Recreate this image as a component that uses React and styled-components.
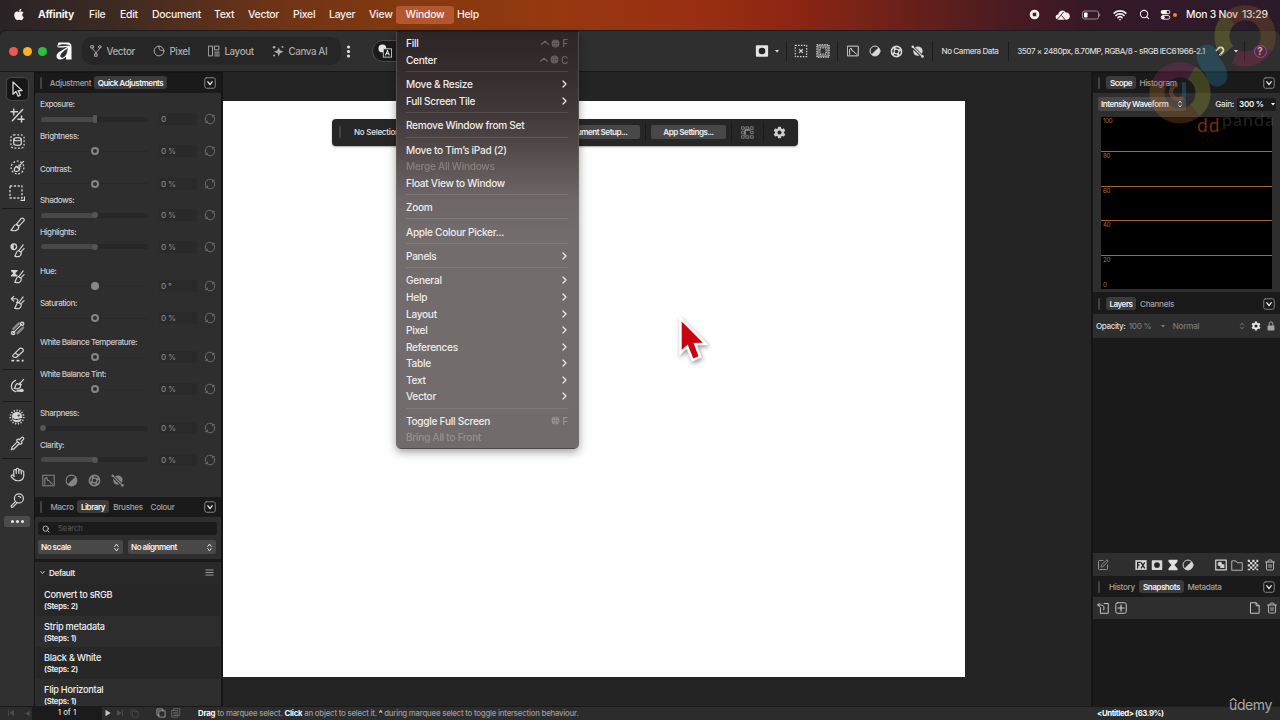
import styled, { createGlobalStyle, css } from 'styled-components';
import { FaApple } from 'react-icons/fa';
import { IoSettingsSharp } from 'react-icons/io5';
import { Search, Wifi, Hand, Pipette, Trash2, SquarePen } from 'lucide-react';

const GlobalStyle = createGlobalStyle`
  *,
  *::after {
    box-sizing: border-box;
  }

  body {
    margin: 0;
    background: #242424;
    font-family: Inter, "Liberation Sans", sans-serif;
    color: #e6e6e6;
    overflow: hidden;
  }
`;

const Screen = styled.div`
  position: relative;
  width: 1280px;
  height: 720px;
  display: flex;
  flex-direction: column;
  overflow: hidden;
  white-space: nowrap;
`;

/* ---------- system menu bar ---------- */

const MenuBar = styled.header`
  height: 31px;
  flex: none;
  display: flex;
  align-items: center;
  padding: 0 12px 2px 13px;
  background: linear-gradient(
    90deg,
    #292326 0,
    #3b2a22 110px,
    #6d3317 270px,
    #83390f 400px,
    #963810 560px,
    #9a2f12 690px,
    #8d2613 790px,
    #6f2119 890px,
    #4b1b21 1000px,
    #351828 1100px,
    #2a1a2a 1280px
  );
  color: #f6f1ee;
  font-size: 10.4px;
  font-weight: 500;
  letter-spacing: -0.25px;
`;

const MenuTitle = styled.span`
  width: ${(props) => props.$w}px;
  flex: none;
  font-weight: ${(props) => (props.$bold ? 700 : 500)};
`;

const ActiveTitle = styled.span`
  width: 58px;
  height: 18px;
  margin: 0 3px 0 -1px;
  flex: none;
  display: flex;
  align-items: center;
  justify-content: center;
  border-radius: 3px;
  background: #b4562f;
`;

const Cell = styled.span`
  width: ${(props) => props.$w}px;
  flex: none;
  display: flex;
  align-items: center;
  justify-content: center;
`;

const Spacer = styled.span`
  flex: 1;
`;

const OrangeDot = styled.span`
  width: 4px;
  height: 4px;
  border-radius: 50%;
  background: #f08a1c;
`;

/* ---------- application toolbar ---------- */

const Toolbar = styled.div`
  height: 41px;
  flex: none;
  display: flex;
  align-items: center;
  padding: 0 9px 0 9px;
  background: #2f2f2f;
  border-radius: 6px 6px 0 0;
  border-bottom: 1px solid #171717;
  box-shadow: 0 -1px 0 #1c1a1c;
  font-size: 8.1px;
  font-weight: 500;
  letter-spacing: -0.45px;
  color: #d8d8d8;
`;

const Light = styled.span`
  width: 9px;
  height: 9px;
  margin-right: 5.3px;
  border-radius: 50%;
  background: ${(props) => props.$color};
`;

const Personas = styled.div`
  height: 28px;
  width: 259px;
  margin-left: 5px;
  padding-left: 8px;
  display: flex;
  align-items: center;
  border-radius: 10px;
  background: #262626;
  color: #adadad;
  font-size: 9.8px;
  letter-spacing: -0.38px;
`;

const Persona = styled.span`
  width: ${(props) => props.$w}px;
  display: flex;
  align-items: center;
  gap: 4.5px;
`;

const ColourPill = styled.span`
  width: 40px;
  height: 22px;
  margin-left: 16px;
  padding-left: 5px;
  display: flex;
  align-items: center;
  border: 1px solid #4b4b4b;
  border-radius: 11px;
  background: #1b1b1b;
`;

const Divider = styled.span`
  width: 1px;
  height: 20px;
  background: #1b1b1b;
`;

/* ---------- work area ---------- */

const Main = styled.div`
  height: 634px;
  flex: none;
  display: flex;
`;

const Tools = styled.nav`
  width: 34px;
  flex: none;
  display: flex;
  flex-direction: column;
  align-items: center;
  padding-top: 5px;
  background: #303030;
  color: #d4d4d4;
`;

const Tool = styled.span`
  width: 23px;
  height: 24px;
  margin-bottom: ${(props) => props.$gap ?? 2}px;
  flex: none;
  display: flex;
  align-items: center;
  justify-content: center;
  border-radius: 5px;
  ${(props) =>
    props.$active &&
    css`
      background: #171717;
      border: 1px solid #484848;
    `}
`;

const ToolLine = styled.hr`
  width: 30px;
  height: 1px;
  margin: 0 0 ${(props) => props.$after ?? 4}px;
  flex: none;
  border: 0;
  background: #191919;
`;

const MoreTools = styled.span`
  width: 26px;
  height: 11px;
  margin-top: 4px;
  display: flex;
  align-items: center;
  justify-content: center;
  gap: 2px;
  border-radius: 2px;
  background: #4c4c4c;

  i {
    width: 3px;
    height: 3px;
    border-radius: 50%;
    background: #e8e8e8;
  }
`;

const LeftPanel = styled.aside`
  width: 189px;
  flex: none;
  display: flex;
  flex-direction: column;
  border: 1px solid #151515;
  border-width: 1px 2px 0 1px;
  background: #2e2e2e;
  overflow: hidden;
`;

const TabRow = styled.div`
  height: 20px;
  flex: none;
  display: flex;
  align-items: center;
  padding: 0 5px 1px;
  background: #1a1a1a;
  font-size: 8.1px;
  font-weight: 500;
  color: #a3a3a3;
`;

const Grip = styled.span`
  width: 2px;
  height: 12px;
  margin-right: ${(props) => props.$gap ?? 5}px;
  flex: none;
  border-radius: 1px;
  background: #434343;
`;

const Tab = styled.span`
  width: ${(props) => props.$w}px;
  height: 13px;
  flex: none;
  display: flex;
  align-items: center;
  justify-content: center;
  border-radius: 3px;
  letter-spacing: -0.3px;
  ${(props) =>
    props.$active &&
    css`
      background: #3b3b3b;
      color: #f2f2f2;
      font-weight: 600;
      letter-spacing: -0.5px;
    `}
`;

const Sliders = styled.div`
  height: 404px;
  flex: none;
  padding: 5px 5px 0 5px;
  font-size: 8.1px;
  font-weight: 500;
`;

const Adjust = styled.div`
  height: ${(props) => props.$h}px;
  letter-spacing: -0.48px;
`;

const AdjustName = styled.div`
  height: 13px;
  line-height: 13px;
  color: #cacaca;
`;

const AdjustControls = styled.div`
  height: 16px;
  display: flex;
  align-items: center;
  color: #858585;
`;

const Track = styled.div`
  position: relative;
  width: 107px;
  height: ${(props) => (props.$kind === 'line' ? 1 : 5)}px;
  margin: 0 11px 0 1px;
  border-radius: 3px;
  background: ${(props) =>
    props.$kind === 'line'
      ? '#292929'
      : `linear-gradient(90deg, #484848 ${props.$pos}%, #272727 ${props.$pos}%)`};

  &::after {
    content: '';
    position: absolute;
    top: 50%;
    left: ${(props) => props.$pos}%;
    width: ${(props) => (props.$kind === 'bar' ? 4 : props.$kind === 'line' ? 8 : 6)}px;
    height: ${(props) => (props.$kind === 'dot' ? 6 : 8)}px;
    transform: translate(-50%, -50%);
    border-radius: ${(props) => (props.$kind === 'bar' ? '1px' : '50%')};
    background: ${(props) => (props.$kind === 'line' ? (props.$solid ? '#888' : '#303030') : '#555')};
    border: ${(props) => (props.$kind === 'line' && !props.$solid ? '2.6px solid #858585' : '0')};
  }
`;

const Value = styled.span`
  width: 38px;
  height: 12px;
  padding-left: 2px;
  display: flex;
  align-items: center;
  border-radius: 2px;
  background: #2a2a2a;
  letter-spacing: -0.2px;
`;

const QuickIcons = styled.div`
  display: flex;
  gap: 10px;
  padding: 4px 0 0 2px;
  color: #858585;
`;

const LibraryTop = styled.div`
  height: 45px;
  flex: none;
  padding: 5px 4px 0 3px;
  border-bottom: 3px solid #191919;
`;

const SearchField = styled.div`
  height: 13px;
  display: flex;
  align-items: center;
  gap: 8px;
  padding-left: 4px;
  border-radius: 2px;
  background: #1b1b1b;
  color: #d0d0d0;
  font-size: 7.6px;
  letter-spacing: -0.1px;

  span {
    color: #5b5b5b;
  }
`;

const SelectRow = styled.div`
  display: flex;
  gap: 5px;
  margin-top: 5px;
`;

const Select = styled.div`
  width: ${(props) => props.$w}px;
  height: 14px;
  padding: 0 2px 0 3px;
  display: flex;
  align-items: center;
  justify-content: space-between;
  border-radius: 2px;
  background: #484848;
  color: #f0f0f0;
  font-size: 8.1px;
  font-weight: 600;
  letter-spacing: -0.5px;
`;

const MacroList = styled.div`
  flex: 1;
  margin: 0 1px;
  overflow: hidden;
  background: #2c2c2c;
`;

const MacroHeader = styled.div`
  height: 22px;
  display: flex;
  align-items: center;
  padding: 0 6px 1px 3px;
  gap: 3px;
  background: #292929;
  font-size: 8.1px;
  font-weight: 600;
  letter-spacing: -0.37px;
`;

const Macro = styled.div`
  height: 31.7px;
  padding: 4px 0 0 8px;
  font-size: 9.2px;
  font-weight: 500;
  line-height: 13px;
  letter-spacing: -0.26px;
  color: #f0f0f0;
  background: #2d2d2d;

  &:nth-child(even) {
    background: #272727;
  }

  small {
    display: block;
    font-size: 7.8px;
    font-weight: 600;
    line-height: 11px;
    letter-spacing: -0.27px;
  }
`;

const Canvas = styled.main`
  position: relative;
  flex: 1;
  padding-top: 29px;
  background: #242424;
`;

const Page = styled.div`
  width: 742px;
  height: 576px;
  background: #fefefe;
`;

const ContextBar = styled.div`
  position: absolute;
  top: 46.5px;
  left: 109px;
  width: 466px;
  height: 27px;
  display: flex;
  align-items: center;
  padding: 0 10px 0 7px;
  border-radius: 4px;
  background: #262626;
  font-size: 8px;
  font-weight: 500;
  letter-spacing: -0.25px;
  box-shadow: 0 1px 2px rgba(0, 0, 0, 0.35);
`;

const BarButton = styled.span`
  width: ${(props) => props.$w}px;
  height: 14px;
  display: flex;
  align-items: center;
  justify-content: center;
  border-radius: 2px;
  background: #484848;
  color: #f0f0f0;
  font-size: 8.1px;
  font-weight: 600;
  letter-spacing: -0.5px;
`;

const RightPanel = styled.aside`
  width: 189px;
  flex: none;
  display: flex;
  flex-direction: column;
  border-left: 2px solid #151515;
  border-top: 1px solid #151515;
  background: #1a1a1a;
`;

const ScopeBody = styled.div`
  height: 199px;
  flex: none;
  padding: 4px 8px 0 5px;
  background: #2e2e2e;
`;

const ScopeControls = styled.div`
  height: 14px;
  display: flex;
  align-items: center;
  font-size: 8.1px;
  font-weight: 500;
  letter-spacing: -0.25px;
  margin: 0 -4px 6px 0;
`;

const GainField = styled.span`
  width: 39px;
  height: 13px;
  margin-left: 3px;
  padding-left: 2px;
  display: flex;
  align-items: center;
  justify-content: space-between;
  border-radius: 2px;
  background: #1c1c1c;
  color: #f3f3f3;
  font-weight: 600;
`;

const Plot = styled.div`
  height: 172px;
  margin-left: 3px;
  display: grid;
  grid-template-rows: repeat(5, 1fr);
  background: #000;
  color: #a9752f;
  font-size: 6.2px;
  line-height: 8px;
  letter-spacing: -0.3px;
`;

const Band = styled.div`
  padding-left: 2px;
  display: flex;
  flex-direction: column;
  justify-content: space-between;

  & + & {
    border-top: 1px solid #a36b2c;
  }
`;

const OptionRow = styled.div`
  height: ${(props) => props.$h}px;
  flex: none;
  display: flex;
  align-items: center;
  padding: 0 ${(props) => props.$right ?? 0}px 0 ${(props) => props.$left ?? 0}px;
  background: #2e2e2e;
  color: #7a7a7a;
  font-size: 8.1px;
  font-weight: 500;
  letter-spacing: -0.25px;
`;

const Strong = styled.span`
  width: 33px;
  color: #dedede;
  letter-spacing: -0.4px;
`;

const Void = styled.div`
  height: ${(props) => props.$h}px;
  flex: none;
`;

const StatusBar = styled.footer`
  height: 14px;
  flex: none;
  display: flex;
  align-items: center;
  padding-bottom: 1px;
  border-top: 1px solid #1a1a1a;
  background: #2c2c2c;
  color: #9d9d9d;
  font-size: 7.8px;
  font-weight: 500;

  b {
    color: #fafafa;
  }
`;

const PageField = styled.span`
  width: 70px;
  height: 14px;
  text-align: center;
  line-height: 13px;
  background: #1b1b1b;
  color: #dedede;
`;

const Hint = styled.span`
  width: 894px;
  padding-left: 12px;
  letter-spacing: -0.21px;
`;

/* ---------- drop-down menu ---------- */

const Dropdown = styled.div`
  position: absolute;
  top: 31px;
  left: 396px;
  width: 183px;
  height: 418px;
  padding: 3px 10px 0 9px;
  border: 1px solid rgba(120, 108, 106, 0.5);
  border-top-color: #241c1c;
  border-radius: 0 0 5px 5px;
  background: linear-gradient(
    180deg,
    #2d2526 0,
    #332b2c 35px,
    #413839 80px,
    #4e4545 110px,
    #5e5555 135px,
    #6d6566 165px,
    #726c6c 200px,
    #726b6b 100%
  );
  box-shadow: 0 3px 9px rgba(0, 0, 0, 0.38);
  color: #efedec;
  font-size: 10.1px;
  font-weight: 500;
  letter-spacing: -0.28px;
`;

const Entry = styled.div`
  height: 16.57px;
  display: flex;
  align-items: center;
  justify-content: space-between;
  opacity: ${(props) => (props.$disabled ? 0.27 : 1)};
`;

const Shortcut = styled.span`
  display: flex;
  align-items: center;
  gap: 2px;
  opacity: 0.3;
`;

const Rule = styled.hr`
  height: 1px;
  margin: 3px 0 3.85px;
  border: 0;
  background: rgba(255, 255, 255, 0.11);
`;

/* ---------- overlays ---------- */

const Cursor = styled.svg`
  position: absolute;
  top: 312px;
  left: 674px;
  filter: drop-shadow(1px 2px 2px rgba(0, 0, 0, 0.4));
`;

const Watermark = styled.svg`
  position: absolute;
  top: 0;
  right: 0;
`;

const Udemy = styled.div`
  position: absolute;
  top: 696px;
  left: 1229px;
  color: #a8a8a8;
  font-size: 14px;
  line-height: 17px;
  letter-spacing: -0.4px;

  svg {
    position: absolute;
    top: 1px;
    left: 0;
  }
`;

/* ---------- icons, all on a 16 unit grid ---------- */

const line = { fill: 'none', stroke: 'currentColor', strokeWidth: 1.3, strokeLinecap: 'round', strokeLinejoin: 'round' };

const shapes = {
  pointer: <path d="M4 1v12.200l3-2.700 2.200 4.700 2.200-1-2.200-4.600h4z" {...line} />,
  vector: (
    <g {...line}>
      <rect x="1.500" y="1" width="3" height="3" />
      <circle cx="13" cy="2.500" r="1.700" />
      <rect x="6.500" y="12" width="3" height="3" />
      <path d="M3 4c0 4 5 3 5 8 0-5 5-4 5-8" />
    </g>
  ),
  pixel: (
    <g {...line}>
      <circle cx="8" cy="8" r="6.500" />
      <path d="M8.500 1.500C6 5.500 10 8.500 14 7" />
    </g>
  ),
  layout: (
    <g {...line}>
      <rect x="1" y="1.500" width="5" height="13" />
      <rect x="9" y="1.500" width="5.500" height="5" />
      <path d="M9 9.500h6M9 12h6M9 14.500h6" />
    </g>
  ),
  sparkle: (
    <g fill="currentColor">
      <path d="M9 2.500l1.500 4.500L15.500 9l-5 2L9 15.500l-1.500-4.500L2.500 9l5-2z" />
      <circle cx="2.800" cy="3" r="1.700" />
      <circle cx="14" cy="2.500" r="1.300" />
      <circle cx="2.800" cy="14" r="1.300" />
    </g>
  ),
  kebab: (
    <g fill="currentColor">
      <circle cx="8" cy="2.500" r="1.900" />
      <circle cx="8" cy="8" r="1.900" />
      <circle cx="8" cy="13.500" r="1.900" />
    </g>
  ),
  colourText: (
    <g>
      <circle cx="5" cy="5" r="4.500" fill="#e4e4e4" />
      <rect x="6" y="5.500" width="9.500" height="9.500" fill="#1b1b1b" stroke="#d8d8d8" />
      <path d="M8.500 13l2.300-5.500L13 13M9.300 11.200h3" fill="none" stroke="#e4e4e4" strokeWidth="1.200" />
    </g>
  ),
  mask: (
    <g>
      <rect x="1" y="1.500" width="14" height="13" rx="1" fill="currentColor" />
      <circle cx="8" cy="8" r="3.800" fill="#222" />
    </g>
  ),
  caret: <path d="M2.500 5.500h11L8 12z" fill="currentColor" />,
  deselect: (
    <g {...line} strokeLinecap="butt">
      <rect x="1.500" y="1.500" width="13" height="13" strokeDasharray="1.700 1.500" />
      <path d="M5.800 5.800l4.400 4.400M10.200 5.800l-4.400 4.400" />
    </g>
  ),
  invert: (
    <g {...line} strokeLinecap="butt">
      <rect x="2.300" y="2.300" width="11.400" height="11.400" strokeWidth="2.800" stroke="#777" />
      <rect x="1" y="1" width="14" height="14" strokeDasharray="1.500 1.300" strokeWidth="1.200" />
      <rect x="4.500" y="4.500" width="7" height="7" strokeDasharray="1.500 1.300" strokeWidth="1.400" />
    </g>
  ),
  levels: (
    <g {...line}>
      <rect x="1" y="1.500" width="14" height="13" />
      <path d="M3.500 12.500V6l2-2 1.500 4h1.500L11 11l2 1.500" />
    </g>
  ),
  contrast: (
    <g>
      <circle cx="8" cy="8" r="6.600" {...line} />
      <path d="M12.700 3.300A6.600 6.600 0 0 1 3.300 12.700z" fill="currentColor" />
    </g>
  ),
  wheel: (
    <g {...line}>
      <circle cx="8" cy="8" r="6.300" strokeWidth="1.900" />
      <circle cx="8" cy="8" r="2.900" strokeWidth="1.300" />
      <path d="M5.500 2.500 6 5.500M13.500 5.500 10.500 7M11 13.500 9.500 10.500M3 11.500l2.500-2" strokeWidth="2.600" strokeLinecap="butt" />
    </g>
  ),
  balance: (
    <g>
      <circle cx="8.500" cy="7.500" r="5.800" fill="currentColor" />
      <path d="M1.500 2 15 15" stroke="#2f2f2f" strokeWidth="3.600" />
      <path d="M2 2 14.500 14.500" {...line} strokeWidth="1.500" />
      <circle cx="2.200" cy="2.200" r="1.600" fill="currentColor" />
      <circle cx="14" cy="14" r="1.600" fill="currentColor" />
    </g>
  ),
  magnet: (
    <g fill="none" strokeWidth="3">
      <path d="M4.500 4.500C8 0 15.500 3 13 8.500L9.500 13" stroke="currentColor" />
      <path d="M1.500 7.500l3-2.500M7.500 15l2-3" stroke="currentColor" strokeDasharray="1.500 1" />
    </g>
  ),
  record: <path fillRule="evenodd" fill="currentColor" d="M8 1a7 7 0 1 0 0 14A7 7 0 0 0 8 1zM5.500 5.500h5v5h-5z" />,
  cloud: (
    <g>
      <path d="M3.500 13.500C-.5 13 0 8 3.500 8c0-4 6-6.500 8-2 5-.5 6 7 1 7.500z" fill="currentColor" />
      <path d="M2.500 13 9.500 5M7 9l4.500 5.500" stroke="#4a1c22" strokeWidth="1" />
    </g>
  ),
  toggles: (
    <g>
      <rect x="1" y="1.500" width="14" height="6" rx="3" fill="currentColor" />
      <circle cx="11.700" cy="4.500" r="2" fill="#351828" />
      <rect x="1.700" y="9.500" width="12.600" height="5.300" rx="2.600" {...line} />
      <circle cx="4.500" cy="12.200" r="2.400" fill="currentColor" />
    </g>
  ),
  crop: (
    <g {...line} strokeWidth="1.500">
      <path d="M1 4h7M4 1v6.500M8.500 12H15M12.300 8.500V15M13.500 1.500l-11 12" />
    </g>
  ),
  selectBrush: (
    <g {...line}>
      <rect x="1" y="1" width="14" height="14" rx="3" strokeDasharray="2 1.800" strokeLinecap="butt" />
      <ellipse cx="8" cy="5.500" rx="4" ry="1.700" />
      <path d="M4 5.500v4.800c0 2.300 8 2.300 8 0V5.500" />
    </g>
  ),
  selectWand: (
    <g {...line}>
      <circle cx="8" cy="8" r="6.800" strokeDasharray="2 1.800" strokeLinecap="butt" />
      <path d="M14.500 1.500 10 6M6.500 6.500 9.500 9.500M4.500 11.500c0-5 4-5.500 6-3 .5 3-3 4.500-6 3zM9.500 5.500l2 1.500" />
    </g>
  ),
  marquee: (
    <g {...line} strokeLinecap="butt">
      <rect x="1" y="1" width="12" height="12" strokeDasharray="2.200 1.600" />
      <path d="M15.500 11.500v4h-4" />
    </g>
  ),
  paint: (
    <g {...line}>
      <path d="M7 7.500l5-6c1.500-1.200 4 1 2.800 2.700L9.500 9.800zM6.500 8C3 8 4.500 12 1 14c4 1.500 8.500 .5 8.300-4zM7 7.500l2.500 2.300" />
    </g>
  ),
  cloneBrush: (
    <g>
      <circle cx="4" cy="4" r="3" {...line} />
      <path d="M4 1a3 3 0 0 0 0 6z" fill="currentColor" />
      <g {...line}><path d="M14 2l-4.500 6M15 6l-3.500 3.500M9 8c-3 1-2 4-4 6 4 1.500 7.500 0 7-4zM9 8l3 2" /></g>
    </g>
  ),
  fillBrush: (
    <g>
      <path d="M1 1h7v1L5.500 4.500 8 7v1H1V7l2.500-2.500L1 2z" fill="currentColor" />
      <g {...line}><path d="M14 2l-4.500 6M15 6l-3.500 3.500M9 8c-3 1-2 4-4 6 4 1.500 7.500 0 7-4zM9 8l3 2" /></g>
    </g>
  ),
  undoBrush: (
    <g {...line}>
      <path d="M2 4h4c3 0 3 3 1 4M4 1.500 1.500 4 4 6.500M14 2l-4.500 6M15 6l-3.500 3.500M9 8c-3 1-2 4-4 6 4 1.500 7.500 0 7-4zM9 8l3 2" />
    </g>
  ),
  heal: (
    <g {...line}>
      <path d="M3.500 8.500l6-6M8 13l6-6" strokeWidth="2.500" stroke="#8d8d8d" />
      <path d="M3 13l10-10" strokeWidth="1.200" />
      <circle cx="13" cy="3" r="1.800" />
      <circle cx="3.300" cy="12.800" r="1.800" />
    </g>
  ),
  erase: (
    <g {...line}>
      <path d="M3 9l7.500-7.500c2-1 4.500 1 3.500 3L7 11H4.500C3.500 11 2.700 10 3 9zM6 6.500 9 9" />
      <path d="M1.500 14.500h13" strokeDasharray="3 2.500" strokeLinecap="butt" strokeWidth="1.700" />
    </g>
  ),
  smudge: (
    <g>
      <g {...line}>
        <path d="M14.500 1.500 10.500 6M6 2.500C0 5 0 13 6 14.500M10 5.500 12 7M7.500 6c-2 1-1 3-3 5 3 1.500 7 .5 7-3.500z" />
      </g>
      <path d="M6 14.500c2-3 4-1 6-3 3 0 4 3 1 3.500z" fill="currentColor" />
    </g>
  ),
  liquify: (
    <g>
      <circle cx="8" cy="8" r="6.700" fill="none" stroke="currentColor" strokeWidth="1.700" strokeDasharray="1.200 1.600" />
      <circle cx="8" cy="8" r="5.200" fill="currentColor" />
      <path d="M3 8.500c3 4 7 1 10 1" fill="none" stroke="#303030" strokeWidth="1" />
      <circle cx="9.700" cy="6.500" r="1.100" fill="#303030" />
    </g>
  ),
  zoom: (
    <g {...line}>
      <circle cx="9.500" cy="5.800" r="4.800" />
      <path d="M6 9l-4.500 4.500c-.8 1 .7 2.200 1.500 1.500L7.500 10.500M9 3.500a2.300 2.300 0 0 1 2.500 1.500" />
    </g>
  ),
  reset: (
    <g {...line} strokeWidth="1.200">
      <path d="M4.200 12.900A6.200 6.200 0 0 1 10.300 2.200M11.800 3.100A6.200 6.200 0 0 1 5.700 13.800" />
      <path d="M1.700 12.700l2.700.5.300-2.600M14.300 3.300l-2.700-.5-.3 2.600" strokeWidth="1" />
    </g>
  ),
  boxChevron: (
    <g {...line}>
      <rect x="1" y="1" width="14" height="14" rx="2.500" stroke="#8d8d8d" strokeWidth="1.200" />
      <path d="M5 6.300 8 10.300l3-4" strokeWidth="1.700" />
    </g>
  ),
  upDown: <path d="M5 6l3-4 3 4M5 10l3 4 3-4" {...line} strokeWidth="1.600" />,
  chevronDown: <path d="M4 5.500l4 5 4-5" {...line} strokeWidth="1.800" />,
  lines: <path d="M1.500 3.500h13M1.500 8h13M1.500 12.500h13" {...line} strokeWidth="1.600" />,
  chevron: <path d="M6 2 12 8l-6 6" {...line} strokeWidth="2.500" />,
  ctrl: <path d="M1 10.500 8 4.500l7 6" {...line} strokeWidth="2.400" />,
  globe: (
    <g>
      <circle cx="8" cy="8" r="7" fill="currentColor" />
      <path d="M1 8h14M8 1v14" stroke="#4a4243" strokeWidth=".5" />
      <ellipse cx="8" cy="8" rx="3.500" ry="7" fill="none" stroke="#4a4243" strokeWidth=".5" />
    </g>
  ),
  anchors: (
    <g {...line} strokeWidth="1">
      <path d="M1 1h3v3H1zM6.500 1h3v3h-3zM12 1h3v3h-3zM1 6.500h3v3H1zM12 6.500h3v3h-3zM1 12h3v3H1zM6.500 12h3v3h-3zM12 12h3v3h-3z" stroke="#8a8a8a" />
      <path d="M5 11V5h6" strokeDasharray="1.500 1.200" />
    </g>
  ),
  lock: (
    <g>
      <rect x="2.500" y="7" width="11" height="8" rx="1" fill="currentColor" />
      <path d="M5 7V4.500a3 3 0 0 1 6 0V7" {...line} strokeWidth="1.600" />
    </g>
  ),
  fx: (
    <g>
      <rect x=".5" y="1.500" width="15" height="13" fill="currentColor" />
      <path d="M3.500 12.500V4.500h4M3.500 8H6M8 4.500l5 8M13 4.500l-5 8" fill="none" stroke="#262626" strokeWidth="1.700" />
    </g>
  ),
  hourglass: <path d="M2 1h12v2.500L10 8l4 4.500V15H2v-2.500L6 8 2 3.500z" fill="currentColor" />,
  maskLayer: (
    <g>
      <rect x="1" y="1.500" width="14" height="13" {...line} strokeWidth="1.700" />
      <circle cx="6.500" cy="6.500" r="3" fill="currentColor" />
      <rect x="7" y="7" width="5.500" height="5" fill="currentColor" />
    </g>
  ),
  folder: <path d="M1 14.500V2.500h5.500l1.500 2.500h7v9.500z" {...line} />,
  checker: (
    <path
      d="M1 1h3v3H1zM7 1h3v3H7zM12.500 1H15v3h-2.500zM4 4h3v3H4zM10 4h2.500v3H10zM1 7h3v3H1zM7 7h3v3H7zM12.500 7H15v3h-2.500zM4 10h3v3H4zM10 10h2.500v3H10zM1 13h3v2H1zM7 13h3v2H7zM12.500 13H15v2h-2.500z"
      fill="currentColor"
    />
  ),
  restore: (
    <g {...line}>
      <path d="M4.500 7.500V15H15V2H9.500M1 4h5c3 0 4 3 3 6.500M3.500 1.500 1 4l2.500 2.500" />
    </g>
  ),
  addBox: (
    <g {...line}>
      <rect x="1" y="1" width="14" height="14" rx="2.500" />
      <path d="M8 4v8M4 8h8" strokeWidth="1.600" />
    </g>
  ),
  file: <path d="M2.500 1h7l4 4v10h-11zM9.500 1v4h4" {...line} />,
  first: <path d="M2 2v12h1.500V2zM14 2v12L5 8z" fill="currentColor" />,
  previous: <path d="M13 2v12L3 8z" fill="currentColor" />,
  play: <path d="M3 1.500v13L13.500 8z" fill="currentColor" />,
  last: <path d="M2 2v12l9-6zM12.500 2v12H14V2z" fill="currentColor" />,
  pages: <path d="M5 4.500h9.500v10H5zM11 4.500v-3H1.500v10H5" {...line} />,
  pageText: (
    <g {...line}>
      <path d="M4 4v-3h10v11h-3M1.500 4h9.500v10.500H1.500zM4 7h5M4 9.500h5M4 12h5" />
    </g>
  ),
};

const IconSvg = styled.svg`
  width: ${(props) => props.$size}px;
  height: ${(props) => props.$size}px;
  flex: none;
  display: block;
  color: ${(props) => props.$color ?? 'inherit'};
`;

const Icon = ({ name, size = 12, color }) => (
  <IconSvg viewBox="0 0 16 16" $size={size} $color={color} aria-hidden="true">
    {shapes[name]}
  </IconSvg>
);

const HelpBadge = styled.span`
  width: 13px;
  height: 13px;
  display: flex;
  align-items: center;
  justify-content: center;
  border: 1px solid #7467b8;
  border-radius: 50%;
  color: #e9e2f4;
  font-size: 10px;
  font-weight: 600;
  letter-spacing: 0;
`;

/* ---------- data ---------- */

const menuTitles = [
  ['File', 31],
  ['Edit', 32],
  ['Document', 62],
  ['Text', 34],
  ['Vector', 45],
  ['Pixel', 36],
  ['Layer', 40],
  ['View', 28],
];

const adjustments = [
  { name: 'Exposure:', value: '0', kind: 'bar', h: 32.3 },
  { name: 'Brightness:', value: '0 %', kind: 'line', h: 32.4 },
  { name: 'Contrast:', value: '0 %', kind: 'line', h: 31.7 },
  { name: 'Shadows:', value: '0 %', kind: 'dot', h: 31.6 },
  { name: 'Highlights:', value: '0 %', kind: 'dot', h: 39 },
  { name: 'Hue:', value: '0 °', kind: 'line', solid: true, h: 32.2 },
  { name: 'Saturation:', value: '0 %', kind: 'line', h: 38.9 },
  { name: 'White Balance Temperature:', value: '0 %', kind: 'line', h: 32.4 },
  { name: 'White Balance Tint:', value: '0 %', kind: 'line', h: 38.8 },
  { name: 'Sharpness:', value: '0 %', kind: 'dot', pos: 2, h: 31.6 },
  { name: 'Clarity:', value: '0 %', kind: 'dot', h: 31.6 },
];

const macros = [
  ['Convert to sRGB', 2],
  ['Strip metadata', 1],
  ['Black & White', 2],
  ['Flip Horizontal', 1],
];

const submenu = (label) => ({ label, more: true });

const windowMenu = [
  [
    { label: 'Fill', keys: 'F', ctrl: true },
    { label: 'Center', keys: 'C', ctrl: true },
  ],
  [submenu('Move & Resize'), submenu('Full Screen Tile')],
  [{ label: 'Remove Window from Set' }],
  [{ label: 'Move to Tim’s iPad (2)' }, { label: 'Merge All Windows', disabled: true }, { label: 'Float View to Window' }],
  [{ label: 'Zoom' }],
  [{ label: 'Apple Colour Picker...' }],
  [submenu('Panels')],
  ['General', 'Help', 'Layout', 'Pixel', 'References', 'Table', 'Text', 'Vector'].map(submenu),
  [{ label: 'Toggle Full Screen', keys: 'F' }, { label: 'Bring All to Front', disabled: true }],
];

/* ---------- sections ---------- */

function SystemBar() {
  return (
    <MenuBar>
      <Cell $w={12}>
        <FaApple size={13} />
      </Cell>
      <Cell $w={13} />
      <MenuTitle $w={51} $bold>Affinity</MenuTitle>
      {menuTitles.map(([title, w]) => (
        <MenuTitle key={title} $w={w}>{title}</MenuTitle>
      ))}
      <ActiveTitle>Window</ActiveTitle>
      <MenuTitle $w={24}>Help</MenuTitle>
      <Spacer />
      <Cell $w={33}><Icon name="record" size={11} /></Cell>
      <Cell $w={22}><Icon name="cloud" size={15} /></Cell>
      <Cell $w={36}>
        <svg width="19" height="10" viewBox="0 0 19 10">
          <rect x=".5" y="1" width="16" height="8" rx="2" fill="none" stroke="#98868c" />
          <rect x="2" y="2.500" width="3.500" height="5" rx=".7" fill="#fff" />
          <path d="M17.700 3.700v2.600" stroke="#98868c" />
        </svg>
      </Cell>
      <Cell $w={22}><Wifi size={14} strokeWidth={2.8} /></Cell>
      <Cell $w={27}><Search size={11} strokeWidth={2.3} /></Cell>
      <Cell $w={14}><Icon name="toggles" size={11} /></Cell>
      <Cell $w={6}><OrangeDot /></Cell>
      <Cell $w={8} />
      <MenuTitle $w={56}>Mon 3 Nov</MenuTitle>
      <MenuTitle $w={26}>13:29</MenuTitle>
    </MenuBar>
  );
}

function AppToolbar() {
  return (
    <Toolbar>
      <Light $color="#f4574f" />
      <Light $color="#f7b32b" />
      <Light $color="#2bc03f" />
      <Cell $w={25}>
        <svg width="16" height="18" viewBox="0 0 16 18">
          <path
            d="M2.500 .5H11c3.500 0 4.500 2 4.500 4.500V17.500H10v-3c-3 4-9.500 4-9.500 0C.5 10 6 9 12 4.500 8.500 5.500 4 6 1 5z"
            fill="#fff"
          />
          <path d="M1 4.500C5 1.800 9 2 14 3.500M4.500 14.500c0-3.500 4-5.500 7-8l-1 5C9 15 6 16.500 4.500 14.500z" fill="#2f2f2f" stroke="#2f2f2f" strokeWidth=".5" />
        </svg>
      </Cell>
      <Personas>
        <Persona $w={63}><Icon name="vector" />Vector</Persona>
        <Persona $w={55}><Icon name="pixel" />Pixel</Persona>
        <Persona $w={64}><Icon name="layout" />Layout</Persona>
        <Persona $w={60}><Icon name="sparkle" />Canva AI</Persona>
      </Personas>
      <Cell $w={15}><Icon name="kebab" size={13} color="#e2e2e2" /></Cell>
      <ColourPill><Icon name="colourText" size={14} /></ColourPill>
      <Spacer />
      <Cell $w={20}><Icon name="mask" size={14} color="#e4e4e4" /></Cell>
      <Cell $w={10}><Icon name="caret" size={6} /></Cell>
      <Cell $w={8}><Divider /></Cell>
      <Cell $w={22}><Icon name="deselect" size={14} /></Cell>
      <Cell $w={21}><Icon name="invert" size={14} /></Cell>
      <Cell $w={9}><Divider /></Cell>
      <Cell $w={22}><Icon name="levels" size={12} /></Cell>
      <Cell $w={21}><Icon name="contrast" size={12} /></Cell>
      <Cell $w={22}><Icon name="wheel" size={13} /></Cell>
      <Cell $w={20}><Icon name="balance" size={13} /></Cell>
      <Cell $w={10}><Divider /></Cell>
      <Cell $w={66}>No Camera Data</Cell>
      <Cell $w={10}><Divider /></Cell>
      <Cell $w={196}>3507 × 2480px, 8.70MP, RGBA/8 - sRGB IEC61966-2.1</Cell>
      <Cell $w={22}><Icon name="magnet" size={10} color="#e8e8e8" /></Cell>
      <Cell $w={9}><Icon name="caret" size={6} /></Cell>
      <Cell $w={9}><Divider /></Cell>
      <Cell $w={22}><HelpBadge>?</HelpBadge></Cell>
    </Toolbar>
  );
}

function ToolStrip() {
  return (
    <Tools>
      <Tool $active><Icon name="pointer" size={16} /></Tool>
      <Tool><Icon name="crop" size={15} /></Tool>
      <Tool><Icon name="selectBrush" size={15} /></Tool>
      <Tool><Icon name="selectWand" size={15} /></Tool>
      <Tool $gap={3}><Icon name="marquee" size={16} /></Tool>
      <ToolLine $after={3} />
      <Tool><Icon name="paint" size={15} /></Tool>
      <Tool><Icon name="cloneBrush" size={15} /></Tool>
      <Tool><Icon name="fillBrush" size={15} /></Tool>
      <Tool><Icon name="undoBrush" size={15} /></Tool>
      <Tool><Icon name="heal" size={15} /></Tool>
      <Tool $gap={2.5}><Icon name="erase" size={15} /></Tool>
      <ToolLine />
      <Tool $gap={3}><Icon name="smudge" size={15} /></Tool>
      <ToolLine $after={3.5} />
      <Tool><Icon name="liquify" size={16} /></Tool>
      <Tool $gap={2.5}><Pipette size={15} strokeWidth={1.9} /></Tool>
      <ToolLine $after={4} />
      <Tool $gap={1.5}><Hand size={15} strokeWidth={1.9} /></Tool>
      <Tool $gap={0}><Icon name="zoom" size={15} /></Tool>
      <MoreTools><i /><i /><i /></MoreTools>
    </Tools>
  );
}

function AdjustmentPanel() {
  return (
    <>
      <TabRow>
        <Grip $gap={5} />
        <Tab $w={47}>Adjustment</Tab>
        <Tab $w={73} $active>Quick Adjustments</Tab>
        <Spacer />
        <Icon name="boxChevron" size={12} color="#e5e5e5" />
      </TabRow>
      <Sliders>
        {adjustments.map((item) => (
          <Adjust key={item.name} $h={item.h}>
            <AdjustName>{item.name}</AdjustName>
            <AdjustControls>
              <Track $kind={item.kind} $pos={item.pos ?? 50} $solid={item.solid} />
              <Value>{item.value}</Value>
              <Spacer />
              <Icon name="reset" size={12} color="#737373" />
            </AdjustControls>
          </Adjust>
        ))}
        <QuickIcons>
          <Icon name="levels" size={13} />
          <Icon name="contrast" size={13} />
          <Icon name="wheel" size={13} />
          <Icon name="balance" size={13} />
        </QuickIcons>
      </Sliders>
    </>
  );
}

function LibraryPanel() {
  return (
    <>
      <TabRow>
        <Grip $gap={5} />
        <Tab $w={30}>Macro</Tab>
        <Tab $w={32} $active>Library</Tab>
        <Tab $w={38}>Brushes</Tab>
        <Tab $w={31}>Colour</Tab>
        <Spacer />
        <Icon name="boxChevron" size={12} color="#e5e5e5" />
      </TabRow>
      <LibraryTop>
        <SearchField>
          <Search size={8} strokeWidth={2.5} />
          <span>Search</span>
        </SearchField>
        <SelectRow>
          <Select $w={85}>No scale<Icon name="upDown" size={9} /></Select>
          <Select $w={88}>No alignment<Icon name="upDown" size={9} /></Select>
        </SelectRow>
      </LibraryTop>
      <MacroList>
        <MacroHeader>
          <Icon name="chevronDown" size={7} />
          Default
          <Spacer />
          <Icon name="lines" size={9} color="#a8a8a8" />
        </MacroHeader>
        {macros.map(([name, steps]) => (
          <Macro key={name}>
            {name}
            <small>(Steps: {steps})</small>
          </Macro>
        ))}
      </MacroList>
    </>
  );
}

function Studio() {
  return (
    <RightPanel>
      <TabRow>
        <Grip $gap={6} />
        <Tab $w={30} $active>Scope</Tab>
        <Tab $w={44}>Histogram</Tab>
        <Spacer />
        <Icon name="boxChevron" size={12} color="#e5e5e5" />
      </TabRow>
      <ScopeBody>
        <ScopeControls>
          <Select $w={88}>Intensity Waveform<Icon name="upDown" size={8} /></Select>
          <Spacer />
          Gain:
          <GainField>300 %<Icon name="caret" size={6} /></GainField>
        </ScopeControls>
        <Plot>
          <Band>100</Band>
          <Band>80</Band>
          <Band>60</Band>
          <Band>40</Band>
          <Band><span>20</span><span>0</span></Band>
        </Plot>
      </ScopeBody>
      <Void $h={2} />
      <TabRow>
        <Grip $gap={6} />
        <Tab $w={30} $active>Layers</Tab>
        <Tab $w={42}>Channels</Tab>
        <Spacer />
        <Icon name="boxChevron" size={12} color="#e5e5e5" />
      </TabRow>
      <OptionRow $h={24} $left={3} $right={4}>
        <Strong>Opacity:</Strong>
        <Cell $w={22}>100 %</Cell>
        <Cell $w={24}><Icon name="caret" size={6} /></Cell>
        <Cell $w={22}>Normal</Cell>
        <Spacer />
        <Icon name="upDown" size={8} />
        <Cell $w={20}><IoSettingsSharp size={10} color="#e6e6e6" /></Cell>
        <Cell $w={10}><Icon name="lock" size={10} color="#a5a5a5" /></Cell>
      </OptionRow>
      <Void $h={215} />
      <OptionRow $h={23}>
        <Cell $w={20}><SquarePen size={12} strokeWidth={1.8} color="#9b9b9b" /></Cell>
        <Cell $w={20} />
        <Cell $w={16}><Icon name="fx" color="#d6d6d6" /></Cell>
        <Cell $w={15}><Icon name="mask" color="#d6d6d6" /></Cell>
        <Cell $w={17}><Icon name="hourglass" color="#e0e0e0" /></Cell>
        <Cell $w={14}><Icon name="contrast" color="#d6d6d6" /></Cell>
        <Spacer />
        <Cell $w={16}><Icon name="maskLayer" color="#d0d0d0" /></Cell>
        <Cell $w={16}><Icon name="folder" color="#b5b5b5" /></Cell>
        <Cell $w={15}><Icon name="checker" color="#d8d8d8" /></Cell>
        <Cell $w={20}><Trash2 size={12} strokeWidth={2} color="#b0b0b0" /></Cell>
      </OptionRow>
      <Void $h={1} />
      <TabRow>
        <Grip $gap={5} />
        <Tab $w={34}>History</Tab>
        <Tab $w={45} $active>Snapshots</Tab>
        <Tab $w={41}>Metadata</Tab>
        <Spacer />
        <Icon name="boxChevron" size={12} color="#e5e5e5" />
      </TabRow>
      <OptionRow $h={22}>
        <Cell $w={20}><Icon name="restore" color="#c9c9c9" /></Cell>
        <Cell $w={16}><Icon name="addBox" color="#c9c9c9" /></Cell>
        <Spacer />
        <Cell $w={16}><Icon name="file" color="#c9c9c9" /></Cell>
        <Cell $w={17}><Trash2 size={12} strokeWidth={2} color="#b0b0b0" /></Cell>
      </OptionRow>
    </RightPanel>
  );
}

function WindowMenu() {
  return (
    <Dropdown>
      {windowMenu.map((group, index) => (
        <div key={group[0].label}>
          {index > 0 && <Rule />}
          {group.map((item) => (
            <Entry key={item.label} $disabled={item.disabled}>
              {item.label}
              {item.more && <Icon name="chevron" size={8} />}
              {item.keys && (
                <Shortcut>
                  {item.ctrl && <Icon name="ctrl" size={8} />}
                  <Icon name="globe" size={9} />
                  {item.keys}
                </Shortcut>
              )}
            </Entry>
          ))}
        </div>
      ))}
    </Dropdown>
  );
}

function Status() {
  return (
    <StatusBar>
      <Cell $w={22}><Icon name="first" size={8} color="#4f4f4f" /></Cell>
      <Cell $w={10}><Icon name="previous" size={7} color="#4f4f4f" /></Cell>
      <PageField>1 of 1</PageField>
      <Cell $w={11}><Icon name="play" size={8} color="#c4c4c4" /></Cell>
      <Cell $w={14}><Icon name="last" size={8} color="#4f4f4f" /></Cell>
      <Cell $w={14}><Icon name="pages" size={9} color="#4a4a4a" /></Cell>
      <Cell $w={12} />
      <Cell $w={16}><Icon name="pages" size={10} color="#aaa" /></Cell>
      <Cell $w={14}><Icon name="pageText" size={10} color="#6c6c6c" /></Cell>
      <Cell $w={3} />
      <Hint>
        <b>Drag</b> to marquee select. <b>Click</b> an object to select it. <b>^</b> during marquee select to toggle
        intersection behaviour.
      </Hint>
      <Spacer />
      <Strong as="b">
        &lt;Untitled&gt; (63.9%)
      </Strong>
      <Cell $w={150} />
    </StatusBar>
  );
}

function Marks() {
  return (
    <>
      <Watermark width="140" height="140" viewBox="1140 0 140 140">
        <g fill="none" strokeWidth="15" opacity=".28">
          <path d="M1230 18.500A23 23 0 0 0 1227.500 51" stroke="#a4a82e" />
          <path d="M1230 18.500A23 23 0 0 1 1265 47.500" stroke="#a3662c" />
          <path d="M1265 47.500A23 23 0 0 1 1235 56.700" stroke="#b1285c" />
          <path d="M1207 55C1209 66 1216 66 1217 76" stroke="#2589b6" strokeWidth="21" strokeLinecap="round" />
          <path d="M1158.400 85A23 23 0 0 1 1191.500 73" stroke="#a12a6d" />
          <path d="M1194.800 110.600A23 23 0 0 1 1158.400 85" stroke="#b36c27" />
          <path d="M1191.500 73A23 23 0 0 1 1194.800 110.600" stroke="#a2aa30" />
        </g>
        <g fill="none" strokeWidth="4" opacity=".36">
          <path d="M1178 85a7 7 0 1 0 5 12" stroke="#b3622d" />
          <path d="M1184 82v15" stroke="#2875a5" />
        </g>
        <text x="1197" y="132" fill="#7c2a12" fontSize="19" fontFamily="Lato, sans-serif" letterSpacing="1">dd</text>
        <text x="1222" y="126" fill="#555" opacity=".42" fontSize="18" fontFamily="Lato, sans-serif" letterSpacing="1">panda</text>
      </Watermark>
      <Cursor width="40" height="56" viewBox="674 312 40 56">
        <path
          d="M681.700 321.500V350l6-5.500 5.600 14 5.200-2.300-5-13.200 9.300-.3z"
          fill="#c90410"
          stroke="#fff"
          strokeWidth="5"
          paintOrder="stroke"
        />
      </Cursor>
      <Udemy>
        udemy
        <svg width="9" height="5" viewBox="0 0 9 5">
          <path d="M1 4 4.300 1.500 7.600 4" fill="none" stroke="currentColor" strokeWidth="1.300" />
        </svg>
      </Udemy>
    </>
  );
}

function App() {
  return (
    <>
      <GlobalStyle />
      <Screen>
        <SystemBar />
        <AppToolbar />
        <Main>
          <ToolStrip />
          <LeftPanel>
            <AdjustmentPanel />
            <LibraryPanel />
          </LeftPanel>
          <Canvas>
            <Page />
            <ContextBar>
              <Grip $gap={13} />
              No Selection
              <Spacer />
              <BarButton $w={90}>Document Setup...</BarButton>
              <Cell $w={11}><Divider /></Cell>
              <BarButton $w={75}>App Settings...</BarButton>
              <Cell $w={11}><Divider /></Cell>
              <Cell $w={20}><Icon name="anchors" size={13} /></Cell>
              <Cell $w={13}><Divider /></Cell>
              <Cell $w={18}><IoSettingsSharp size={13} color="#cfcfcf" /></Cell>
            </ContextBar>
          </Canvas>
          <Studio />
        </Main>
        <Status />
        <WindowMenu />
        <Marks />
      </Screen>
    </>
  );
}

export default App;
